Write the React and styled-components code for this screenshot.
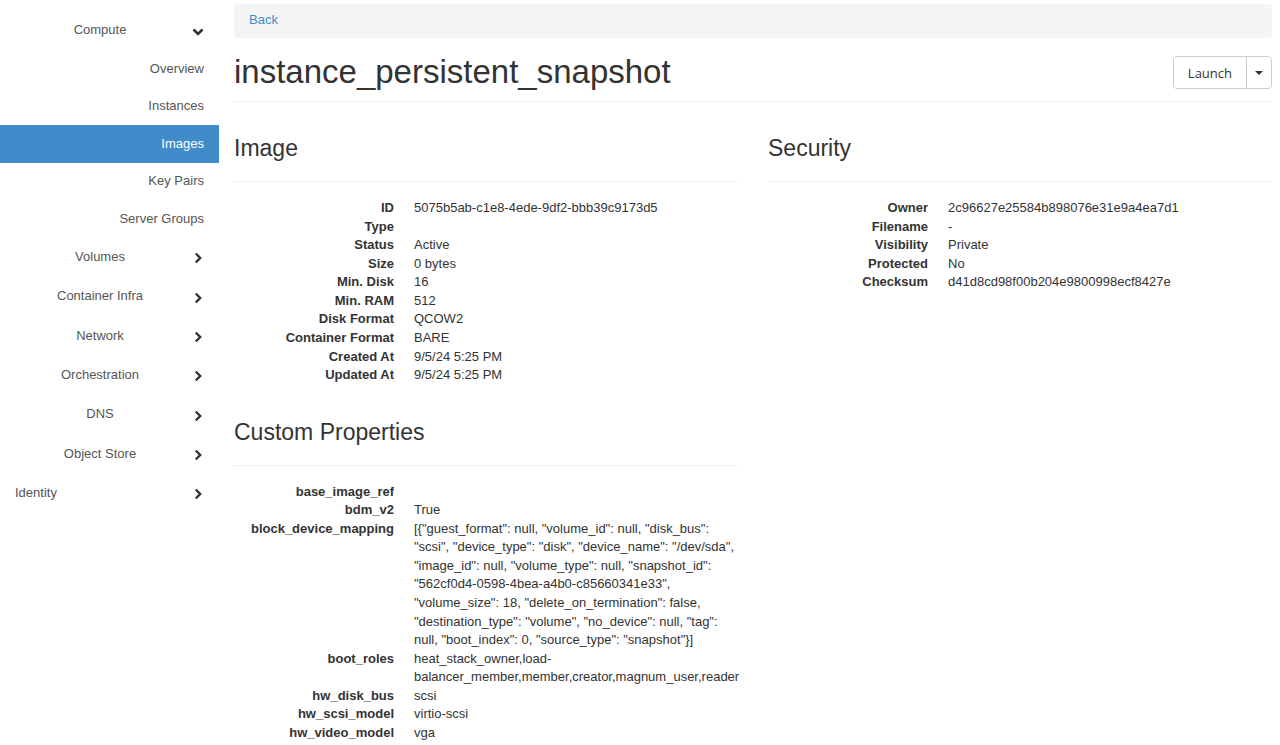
import styled, { createGlobalStyle } from "styled-components";

const GlobalStyle = createGlobalStyle`
  html, body {
    margin: 0;
    padding: 0;
    background: #fff;
  }
  body {
    font-family: "Liberation Sans", Arial, Helvetica, sans-serif;
    font-size: 13px;
    line-height: 1.428571;
    color: #333;
  }
  * { box-sizing: border-box; }
`;

const Layout = styled.div`
  display: flex;
  align-items: flex-start;
  min-height: 745px;
`;

const Sidebar = styled.nav`
  width: 219px;
  flex: none;
  padding-top: 11px;
  display: flex;
  flex-direction: column;
`;

const PanelToggle = styled.div`
  display: flex;
  align-items: center;
  height: 39.3px;
  color: #555;
  padding-right: 15px;
`;

const PanelLabel = styled.span`
  flex: 1;
  text-align: ${(p) => (p.$left ? "left" : "center")};
  padding-left: ${(p) => (p.$left ? "15px" : "8px")};
`;

const Chevron = styled.svg`
  width: 12px;
  height: 12px;
  flex: none;
  margin-top: 2px;
`;

const NavLink = styled.a`
  display: flex;
  align-items: center;
  justify-content: flex-end;
  height: 37.5px;
  padding-right: 15px;
  color: ${(p) => (p.$active ? "#fff" : "#555")};
  background: ${(p) => (p.$active ? "#428bca" : "transparent")};
  text-decoration: none;
`;

const Main = styled.main`
  flex: 1;
  min-width: 0;
  padding: 4px 8px 0 15px;
`;

const Breadcrumb = styled.div`
  background: #f5f5f5;
  border-radius: 4px;
  padding: 7px 15px 9px;
  height: 34px;
  line-height: 18px;
`;

const BackLink = styled.a`
  color: #428bca;
  text-decoration: none;
`;

const PageHeader = styled.div`
  display: flex;
  justify-content: space-between;
  align-items: center;
  margin-top: 18px;
  padding-bottom: 12px;
  border-bottom: 1px solid #eee;
`;

const Title = styled.h1`
  margin: 0;
  font-size: 33px;
  line-height: 33px;
  font-weight: normal;
  color: #333;
  position: relative;
  top: -1px;
`;

const SplitButton = styled.div`
  display: flex;
  height: 33px;
  border: 1px solid #ccc;
  border-radius: 4px;
  overflow: hidden;
  background: #fff;
`;

const ButtonPart = styled.button`
  border: none;
  background: #fff;
  font-family: "Open Sans", "Liberation Sans", sans-serif;
  font-size: 13px;
  color: #333;
  padding: 0 ${(p) => p.$pad}px;
  display: flex;
  align-items: center;
  justify-content: center;
  border-left: ${(p) => (p.$divider ? "1px solid #ccc" : "none")};
  cursor: pointer;
`;

const Caret = styled.span`
  width: 0;
  height: 0;
  border-left: 4px solid transparent;
  border-right: 4px solid transparent;
  border-top: 4px solid #333;
`;

const Columns = styled.div`
  display: flex;
  gap: 30px;
`;

const Column = styled.div`
  flex: 1;
  min-width: 0;
`;

const SectionHeading = styled.h3`
  margin: ${(p) => (p.$first ? "33px" : "34px")} 0 0;
  font-size: 23px;
  line-height: 26px;
  font-weight: normal;
  color: #333;
  padding-bottom: 20px;
  border-bottom: 1px solid #eee;
`;

const DetailList = styled.dl`
  display: grid;
  grid-template-columns: 160px 1fr;
  column-gap: 20px;
  margin: 17px 0 0;
`;

const Term = styled.dt`
  font-weight: bold;
  text-align: right;
  white-space: nowrap;
  overflow: hidden;
  text-overflow: ellipsis;
`;

const Value = styled.dd`
  margin: 0;
  overflow-wrap: break-word;
`;

const ChevronDown = () => (
  <Chevron viewBox="0 0 12 12">
    <polyline points="1.5,3.5 6,8 10.5,3.5" fill="none" stroke="#333" strokeWidth="2.6" />
  </Chevron>
);

const ChevronRight = () => (
  <Chevron viewBox="0 0 12 12">
    <polyline points="3.8,1.5 8.2,6 3.8,10.5" fill="none" stroke="#333" strokeWidth="2.4" />
  </Chevron>
);

const computeLinks = ["Overview", "Instances", "Images", "Key Pairs", "Server Groups"];
const panels = ["Volumes", "Container Infra", "Network", "Orchestration", "DNS", "Object Store"];

const imageInfo = [
  ["ID", "5075b5ab-c1e8-4ede-9df2-bbb39c9173d5"],
  ["Type", ""],
  ["Status", "Active"],
  ["Size", "0 bytes"],
  ["Min. Disk", "16"],
  ["Min. RAM", "512"],
  ["Disk Format", "QCOW2"],
  ["Container Format", "BARE"],
  ["Created At", "9/5/24 5:25 PM"],
  ["Updated At", "9/5/24 5:25 PM"],
];

const security = [
  ["Owner", "2c96627e25584b898076e31e9a4ea7d1"],
  ["Filename", "-"],
  ["Visibility", "Private"],
  ["Protected", "No"],
  ["Checksum", "d41d8cd98f00b204e9800998ecf8427e"],
];

const customProps = [
  ["base_image_ref", ""],
  ["bdm_v2", "True"],
  [
    "block_device_mapping",
    '[{"guest_format": null, "volume_id": null, "disk_bus": "scsi", "device_type": "disk", "device_name": "/dev/sda", "image_id": null, "volume_type": null, "snapshot_id": "562cf0d4-0598-4bea-a4b0-c85660341e33", "volume_size": 18, "delete_on_termination": false, "destination_type": "volume", "no_device": null, "tag": null, "boot_index": 0, "source_type": "snapshot"}]',
  ],
  ["boot_roles", "heat_stack_owner,load-balancer_member,member,creator,magnum_user,reader"],
  ["hw_disk_bus", "scsi"],
  ["hw_scsi_model", "virtio-scsi"],
  ["hw_video_model", "vga"],
];

function Details({ rows }) {
  return (
    <DetailList>
      {rows.flatMap(([k, v]) => [
        <Term key={k + "-t"}>{k}</Term>,
        <Value key={k + "-v"}>{v}</Value>,
      ])}
    </DetailList>
  );
}

export default function App() {
  return (
    <>
      <GlobalStyle />
      <Layout>
        <Sidebar>
          <PanelToggle>
            <PanelLabel>Compute</PanelLabel>
            <ChevronDown />
          </PanelToggle>
          {computeLinks.map((l) => (
            <NavLink key={l} $active={l === "Images"}>
              {l}
            </NavLink>
          ))}
          {panels.map((p) => (
            <PanelToggle key={p}>
              <PanelLabel>{p}</PanelLabel>
              <ChevronRight />
            </PanelToggle>
          ))}
          <PanelToggle>
            <PanelLabel $left>Identity</PanelLabel>
            <ChevronRight />
          </PanelToggle>
        </Sidebar>
        <Main>
          <Breadcrumb>
            <BackLink>Back</BackLink>
          </Breadcrumb>
          <PageHeader>
            <Title>instance_persistent_snapshot</Title>
            <SplitButton>
              <ButtonPart $pad={14}>Launch</ButtonPart>
              <ButtonPart $pad={8} $divider>
                <Caret />
              </ButtonPart>
            </SplitButton>
          </PageHeader>
          <Columns>
            <Column>
              <SectionHeading $first>Image</SectionHeading>
              <Details rows={imageInfo} />
              <SectionHeading>Custom Properties</SectionHeading>
              <Details rows={customProps} />
            </Column>
            <Column>
              <SectionHeading $first>Security</SectionHeading>
              <Details rows={security} />
            </Column>
          </Columns>
        </Main>
      </Layout>
    </>
  );
}
